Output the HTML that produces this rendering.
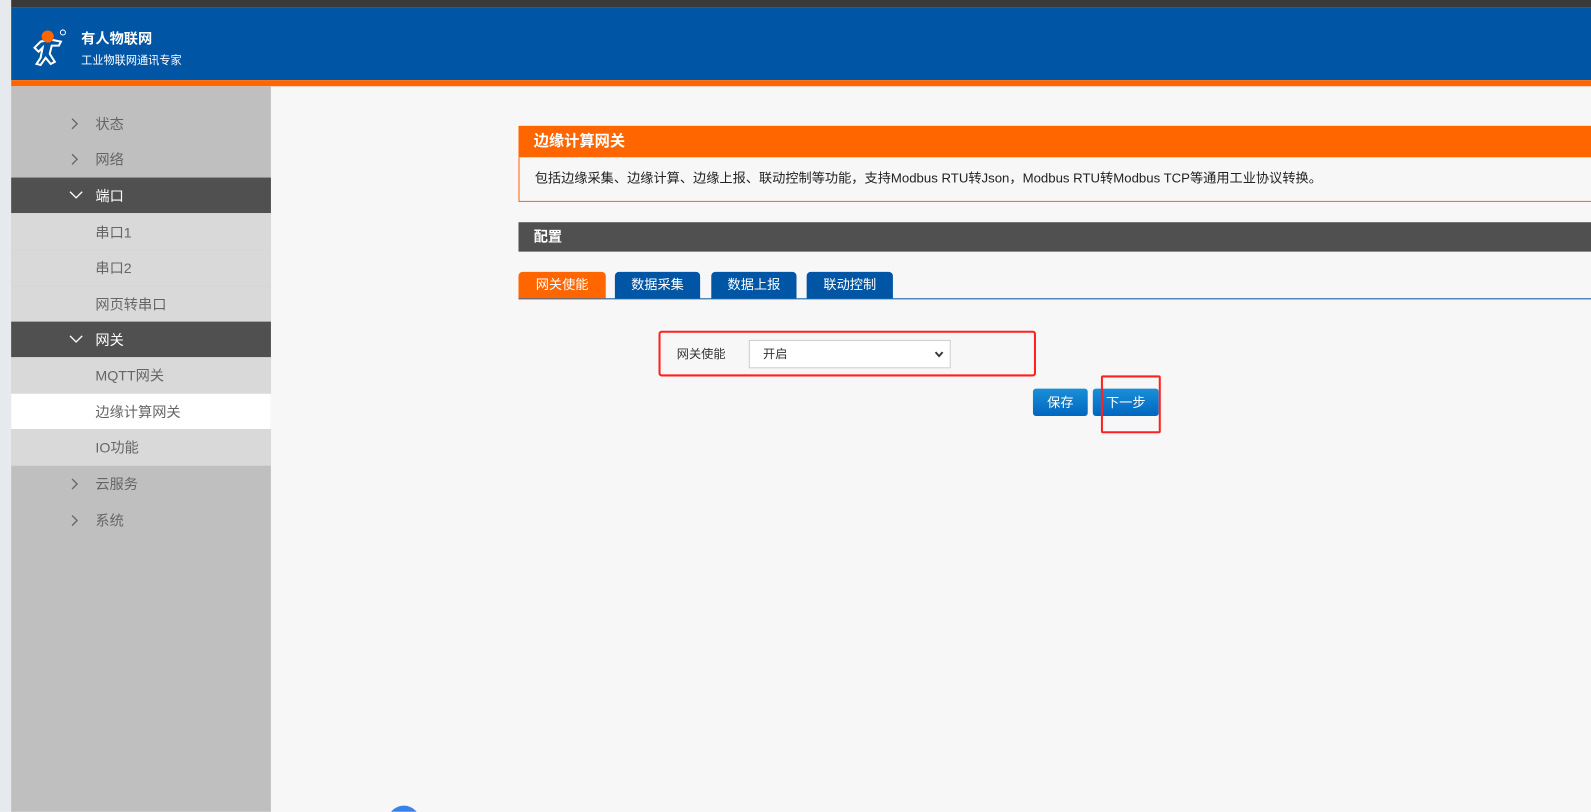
<!DOCTYPE html>
<html><head><meta charset="utf-8"><style>
*{margin:0;padding:0;box-sizing:border-box}
body{width:1591px;height:811px;overflow:hidden;background:#f7f7f7;font-family:"Liberation Sans","Noto Sans CJK SC",sans-serif;position:relative}
#w{position:absolute;left:0;top:0;width:1568px;height:800px;transform:scale(1.01467);transform-origin:0 0;overflow:hidden}
.a{position:absolute}
.side div{position:absolute;left:11px;width:256px;height:36px;font-size:14px;line-height:36px;color:#666}
.chev{position:absolute;left:57px;top:12px}
</style></head><body><div id="w">
<div class="a" style="left:0;top:0;width:11px;height:811px;background:#e6e9ee"></div>
<div class="a" style="left:12px;top:0;width:0;height:811px;border-left:1px dashed #4a90d9"></div>
<div class="a" style="left:11px;top:0;width:1580px;height:7px;background:#3a3a3a"></div>
<div class="a" style="left:11px;top:7px;width:1580px;height:72px;background:#0055a4"></div>
<div class="a" style="left:11px;top:79px;width:1580px;height:6px;background:#ff6600"></div>
<svg class="a" style="left:30px;top:27px" width="40" height="40" viewBox="0 0 40 40">
<path d="M10 14 L4 20 L8 24 L12 20 L10 30 L6 36 L10 37 L15 30 L20 36 L24 34 L19 26 L21 18 L28 18 L30 14 L20 12Z" fill="none" stroke="#fff" stroke-width="2"/>
<circle cx="17" cy="9" r="6" fill="#ff6600"/><circle cx="32" cy="5" r="2.5" fill="none" stroke="#fff" stroke-width="1"/></svg>
<div class="a" style="left:80px;top:28px;color:#fff;font-size:14px;font-weight:bold">有人物联网</div>
<div class="a" style="left:80px;top:51px;color:#fff;font-size:11px">工业物联网通讯专家</div>
<div class="a" style="left:11px;top:85px;width:256px;height:726px;background:#bfbfbf"></div>
<div class="side">
<div style="top:104px"><svg class="chev" width="10" height="12"><path d="M3 1l5 5-5 5" fill="none" stroke="#666" stroke-width="1.3"/></svg><span style="position:absolute;left:83px">状态</span></div>
<div style="top:139px"><svg class="chev" width="10" height="12"><path d="M3 1l5 5-5 5" fill="none" stroke="#666" stroke-width="1.3"/></svg><span style="position:absolute;left:83px">网络</span></div>
<div style="top:175px;height:35px;background:#505050;color:#fff"><svg class="chev" width="14" height="10"><path d="M1 2l6 6 6-6" fill="none" stroke="#fff" stroke-width="1.3"/></svg><span style="position:absolute;left:83px">端口</span></div>
<div style="top:210px;background:#d9d9d9;height:36px;line-height:38px"><span style="position:absolute;left:83px">串口1</span></div>
<div style="top:246px;background:#d9d9d9;height:36px"><span style="position:absolute;left:83px">串口2</span></div>
<div style="top:282px;background:#d9d9d9;height:35px"><span style="position:absolute;left:83px">网页转串口</span></div>
<div style="top:317px;height:35px;background:#505050;color:#fff"><svg class="chev" width="14" height="10"><path d="M1 2l6 6 6-6" fill="none" stroke="#fff" stroke-width="1.3"/></svg><span style="position:absolute;left:83px">网关</span></div>
<div style="top:352px;background:#d9d9d9"><span style="position:absolute;left:83px">MQTT网关</span></div>
<div style="top:388px;background:#fff;height:35px"><span style="position:absolute;left:83px">边缘计算网关</span></div>
<div style="top:423px;background:#d9d9d9"><span style="position:absolute;left:83px">IO功能</span></div>
<div style="top:459px"><svg class="chev" width="10" height="12"><path d="M3 1l5 5-5 5" fill="none" stroke="#666" stroke-width="1.3"/></svg><span style="position:absolute;left:83px">云服务</span></div>
<div style="top:495px"><svg class="chev" width="10" height="12"><path d="M3 1l5 5-5 5" fill="none" stroke="#666" stroke-width="1.3"/></svg><span style="position:absolute;left:83px">系统</span></div>
</div>
<div class="a" style="left:511px;top:124px;width:1080px;height:31px;background:#ff6600;color:#fff;font-size:15px;font-weight:bold;line-height:31px;padding-left:15px">边缘计算网关</div>
<div class="a" style="left:511px;top:155px;width:1080px;height:44px;border:1px solid #ff6600;border-top:none;font-size:13px;line-height:42px;padding-left:15px;color:#222">包括边缘采集、边缘计算、边缘上报、联动控制等功能，支持Modbus RTU转Json，Modbus RTU转Modbus TCP等通用工业协议转换。</div>
<div class="a" style="left:511px;top:219px;width:1080px;height:29px;background:#505050;color:#fff;font-size:14px;font-weight:bold;line-height:29px;padding-left:15px">配置</div>
<div class="a" style="left:511px;top:294px;width:1080px;height:1px;background:#0055a4"></div>
<div class="a" style="left:511px;top:268px;width:86px;height:26px;background:#ff6600;border-radius:4px 4px 0 0;color:#fff;font-size:13px;text-align:center;line-height:26px">网关使能</div>
<div class="a" style="left:606px;top:268px;width:84px;height:26px;background:#0055a4;border-radius:4px 4px 0 0;color:#fff;font-size:13px;text-align:center;line-height:26px">数据采集</div>
<div class="a" style="left:701px;top:268px;width:84px;height:26px;background:#0055a4;border-radius:4px 4px 0 0;color:#fff;font-size:13px;text-align:center;line-height:26px">数据上报</div>
<div class="a" style="left:795px;top:268px;width:85px;height:26px;background:#0055a4;border-radius:4px 4px 0 0;color:#fff;font-size:13px;text-align:center;line-height:26px">联动控制</div>
<div class="a" style="left:649px;top:326px;width:372px;height:45px;border:2px solid #ff2020;border-radius:3px"></div>
<div class="a" style="left:667px;top:340px;font-size:12px;color:#333">网关使能</div>
<div class="a" style="left:738px;top:335px;width:199px;height:28px;background:#fff;border:1px solid #ccc;font-size:12px;line-height:26px;padding-left:13px;color:#333">开启<svg style="position:absolute;right:6px;top:10px" width="9" height="7"><path d="M1 1l3.5 4 3.5-4" fill="none" stroke="#333" stroke-width="1.8"/></svg></div>
<div class="a" style="left:1018px;top:383px;width:54px;height:27px;background:linear-gradient(#1a8fd8,#0066c0);border-radius:3px;color:#fff;font-size:13px;text-align:center;line-height:27px">保存</div>
<div class="a" style="left:1077px;top:383px;width:65px;height:27px;background:linear-gradient(#1a8fd8,#0066c0);border-radius:3px;color:#fff;font-size:13px;text-align:center;line-height:27px">下一步</div>
<div class="a" style="left:1085px;top:370px;width:59px;height:57px;border:2px solid #ff2020;border-radius:2px"></div>
<div class="a" style="left:382px;top:794px;width:32px;height:32px;border-radius:50%;background:#3b82e6"></div>
</div></body></html>
